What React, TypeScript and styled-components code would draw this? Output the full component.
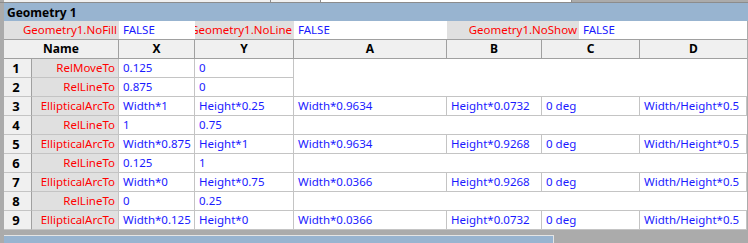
import React from 'react';
import styled, { createGlobalStyle, css } from 'styled-components';

const colors = {
  frame: '#ababab',
  frameDark: '#8c8c8c',
  title: '#98b4d0',
  label: '#e0e0e0',
  header: '#f0f0f0',
  white: '#ffffff',
  gridLine: '#c4c4c4',
  headLine: '#a0a0a0',
  red: '#ff0000',
  blue: '#1a1aff',
};

const GlobalStyle = createGlobalStyle`
  html, body {
    margin: 0;
    padding: 0;
    background: ${colors.frame};
  }
  body {
    font-family: "Noto Sans", "Open Sans", sans-serif;
    font-size: 11.5px;
  }
`;

const COLS = '28px 87px 76px 99px 153px 95px 98px 107px';

const Frame = styled.div`
  width: 748px;
  height: 243px;
  overflow: hidden;
  background: ${colors.frame};
  display: flex;
  flex-direction: column;
`;

const TopStrip = styled.div`
  height: 3px;
  display: flex;
  border-bottom: 1px solid ${colors.frameDark};
  padding-left: 4px;
`;

const TopSeg = styled.div<{ $w: number; $bg: string }>`
  width: ${p => p.$w}px;
  background: ${p => p.$bg};
  border-right: 1px solid ${colors.frameDark};
`;

const TitleBar = styled.div`
  height: 21px;
  margin-left: 4px;
  background: ${colors.title};
  display: flex;
  align-items: center;
  padding-left: 3px;
  font-weight: 700;
  font-size: 12px;
  color: #000;
`;

const Sheet = styled.div`
  margin-left: 4px;
  width: 743px;
  display: flex;
  flex-direction: column;
`;

const PropRow = styled.div`
  height: 18px;
  display: flex;
  border-bottom: 1px solid ${colors.headLine};
`;

const PropCell = styled.div<{ $w: number; $label?: boolean }>`
  width: ${p => p.$w}px;
  flex-shrink: 0;
  display: flex;
  align-items: center;
  overflow: hidden;
  white-space: nowrap;
  ${p =>
    p.$label
      ? css`
          justify-content: flex-end;
          background: ${colors.label};
          color: ${colors.red};
          padding-right: 2px;
        `
      : css`
          background: ${colors.white};
          color: ${colors.blue};
          padding-left: 4px;
        `}
  box-sizing: border-box;
`;

const HeadRow = styled.div`
  height: 18px;
  display: grid;
  grid-template-columns: 115px 76px 99px 153px 95px 98px 107px;
  background: ${colors.header};
  border-bottom: 1px solid ${colors.headLine};
`;

const HeadCell = styled.div`
  display: flex;
  align-items: center;
  justify-content: center;
  font-weight: 700;
  font-size: 12px;
  color: #000;
  border-right: 1px solid ${colors.headLine};
  &:last-child {
    border-right: none;
  }
`;

const DataRow = styled.div`
  height: 19px;
  display: grid;
  grid-template-columns: ${COLS};
`;

const Cell = styled.div<{ $kind: 'num' | 'name' | 'value' | 'blank'; $top?: boolean }>`
  display: flex;
  align-items: center;
  overflow: hidden;
  white-space: nowrap;
  box-sizing: border-box;
  ${p => p.$top && css`box-shadow: 0 -1px 0 ${colors.gridLine};`}
  ${p => {
    switch (p.$kind) {
      case 'num':
        return css`
          justify-content: center;
          padding-right: 3px;
          background: ${colors.header};
          font-weight: 700;
          font-size: 13px;
          color: #000;
          border-right: 1px solid ${colors.headLine};
          border-bottom: 1px solid ${colors.gridLine};
        `;
      case 'name':
        return css`
          justify-content: flex-end;
          padding-right: 3px;
          background: ${colors.label};
          color: ${colors.red};
          border-right: 1px solid ${colors.gridLine};
          border-bottom: 1px solid ${colors.gridLine};
        `;
      case 'value':
        return css`
          padding-left: 4px;
          background: ${colors.white};
          color: ${colors.blue};
          border-right: 1px solid ${colors.gridLine};
          border-bottom: 1px solid ${colors.gridLine};
        `;
      default:
        return css`
          grid-column: span 4;
          background: ${colors.white};
        `;
    }
  }}
`;

const BottomBar = styled.div`
  margin-top: 5px;
  height: 10px;
  display: flex;
`;

const Tab = styled.div`
  margin-left: 4px;
  width: 549px;
  background: ${colors.title};
  border-top: 1px solid #e4e4e4;
  border-right: 1px solid #e4e4e4;
`;

type Row = { name: string; values: string[] };

const rows: Row[] = [
  { name: 'RelMoveTo', values: ['0.125', '0'] },
  { name: 'RelLineTo', values: ['0.875', '0'] },
  { name: 'EllipticalArcTo', values: ['Width*1', 'Height*0.25', 'Width*0.9634', 'Height*0.0732', '0 deg', 'Width/Height*0.5'] },
  { name: 'RelLineTo', values: ['1', '0.75'] },
  { name: 'EllipticalArcTo', values: ['Width*0.875', 'Height*1', 'Width*0.9634', 'Height*0.9268', '0 deg', 'Width/Height*0.5'] },
  { name: 'RelLineTo', values: ['0.125', '1'] },
  { name: 'EllipticalArcTo', values: ['Width*0', 'Height*0.75', 'Width*0.0366', 'Height*0.9268', '0 deg', 'Width/Height*0.5'] },
  { name: 'RelLineTo', values: ['0', '0.25'] },
  { name: 'EllipticalArcTo', values: ['Width*0.125', 'Height*0', 'Width*0.0366', 'Height*0.0732', '0 deg', 'Width/Height*0.5'] },
];

const App: React.FC = () => {
  return (
    <>
      <GlobalStyle />
      <Frame>
        <TopStrip>
          <TopSeg $w={266} $bg="#f0f0f0" />
          <TopSeg $w={49} $bg="#f0f0f0" />
          <TopSeg $w={250} $bg={colors.white} />
        </TopStrip>
        <TitleBar>Geometry 1</TitleBar>
        <Sheet>
          <PropRow>
            <PropCell $w={115} $label>Geometry1.NoFill</PropCell>
            <PropCell $w={76}>FALSE</PropCell>
            <PropCell $w={99} $label>Geometry1.NoLine</PropCell>
            <PropCell $w={153}>FALSE</PropCell>
            <PropCell $w={132} $label>Geometry1.NoShow</PropCell>
            <PropCell $w={168}>FALSE</PropCell>
          </PropRow>
          <HeadRow>
            {['Name', 'X', 'Y', 'A', 'B', 'C', 'D'].map(h => (
              <HeadCell key={h}>{h}</HeadCell>
            ))}
          </HeadRow>
          {rows.map((r, i) => {
            const full = r.values.length > 2;
            return (
              <DataRow key={i}>
                <Cell $kind="num">{i + 1}</Cell>
                <Cell $kind="name">{r.name}</Cell>
                {r.values.map((v, j) => (
                  <Cell key={j} $kind="value" $top={j > 1}>{v}</Cell>
                ))}
                {!full && <Cell $kind="blank" />}
              </DataRow>
            );
          })}
        </Sheet>
        <BottomBar>
          <Tab />
        </BottomBar>
      </Frame>
    </>
  );
};

export default App;
